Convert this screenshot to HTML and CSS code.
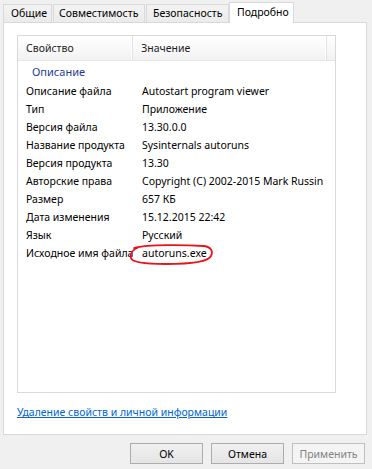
FILE: index.html
```html
<!DOCTYPE html>
<html>
<head>
    <title>Свойства: autoruns.exe</title>
    <link rel="stylesheet" href="styles.css">
</head>
<body>
    <div id="dialog">
        <div id="tabs">
            <div class="tab tab-general">Общие</div>
            <div class="tab tab-compat">Совместимость</div>
            <div class="tab tab-security">Безопасность</div>
            <div class="tab tab-details active">Подробно</div>
        </div>
        <div id="panel">
            <div id="prop-list">
                <div class="list-header">
                    <div class="col-head col-name">Свойство</div>
                    <div class="col-head col-value">Значение</div>
                    <div class="col-head col-rest"></div>
                </div>
                <div class="group-row">Описание</div>
                <div class="prop-row"><span class="cell-name">Описание файла</span><span class="cell-value">Autostart program viewer</span></div>
                <div class="prop-row"><span class="cell-name">Тип</span><span class="cell-value">Приложение</span></div>
                <div class="prop-row"><span class="cell-name">Версия файла</span><span class="cell-value">13.30.0.0</span></div>
                <div class="prop-row"><span class="cell-name">Название продукта</span><span class="cell-value">Sysinternals autoruns</span></div>
                <div class="prop-row"><span class="cell-name">Версия продукта</span><span class="cell-value">13.30</span></div>
                <div class="prop-row"><span class="cell-name">Авторские права</span><span class="cell-value">Copyright (C) 2002-2015 Mark Russin</span></div>
                <div class="prop-row"><span class="cell-name">Размер</span><span class="cell-value">657 КБ</span></div>
                <div class="prop-row"><span class="cell-name">Дата изменения</span><span class="cell-value">15.12.2015 22:42</span></div>
                <div class="prop-row"><span class="cell-name">Язык</span><span class="cell-value">Русский</span></div>
                <div class="prop-row"><span class="cell-name">Исходное имя файла</span><span class="cell-value">autoruns.exe</span></div>
                <!-- hand-drawn mark over the file name -->
                <svg id="scribble" width="90" height="24" viewBox="0 0 90 24">
                    <path d="M6 4 C20 0, 60 1, 76 2 C84 3, 85 8, 83 12 C80 18, 60 20, 38 20 C20 20, 4 19, 3 14 C2 10, 3 6, 11 3"
                          fill="none" stroke="#e8131b" stroke-width="1.8" stroke-linecap="round"/>
                </svg>
            </div>
            <a id="remove-link" href="#">Удаление свойств и личной информации</a>
        </div>
        <div id="buttons">
            <button class="btn">OK</button>
            <button class="btn">Отмена</button>
            <button class="btn" disabled>Применить</button>
        </div>
    </div>
</body>
</html>
```

FILE: styles.css
```css
/* Properties dialog, "Details" tab */
body {
    margin: 0;
    font-family: 'Segoe UI', 'Noto Sans', sans-serif;
    font-size: 10.5px;
    color: #000000;
    background-color: #F0F0F0;
}

#dialog {
    padding: 2px 6px 0 3px;
}

#tabs {
    display: flex;
    align-items: flex-end;
    height: 20px;
}

.tab {
    box-sizing: border-box;
    height: 18px;
    margin-right: 1px;
    padding-left: 7px;
    line-height: 16px;
    white-space: nowrap;
    border: 1px solid #D9D9D9;
    border-bottom: none;
    background: linear-gradient(#F3F3F3, #EBEBEB);
}

.tab-general { width: 49px; }
.tab-compat { width: 92px; padding-left: 5px; }
.tab-security { width: 83px; margin-right: 0; padding-left: 6px; }

.tab.active {
    position: relative;
    width: 65px;
    height: 21px;
    margin-bottom: -1px;
    line-height: 19px;
    background: #FFFFFF;
    z-index: 1;
}

#panel {
    box-sizing: border-box;
    width: 364px;
    height: 413px;
    padding: 12px 0 0 13px;
    border: 1px solid #D9D9D9;
    background-color: #FFFFFF;
}

#prop-list {
    position: relative;
    box-sizing: border-box;
    width: 319px;
    height: 358px;
    border: 1px solid #D9D9D9;
}

.list-header {
    display: flex;
    height: 24px;
    border-bottom: 1px solid #E5E5E5;
    background: linear-gradient(#FFFFFF, #F2F2F2);
}

.col-head {
    box-sizing: border-box;
    padding-left: 8px;
    line-height: 24px;
    color: #1E1E1E;
    border-right: 1px solid #E3E3E3;
    box-shadow: inset -1px 0 0 #FFFFFF;
}

.col-name { width: 117px; }
.col-value { width: 197px; }
.col-rest { flex-grow: 1; border-right: none; box-shadow: none; }

.group-row {
    height: 21px;
    padding-left: 14px;
    line-height: 21px;
    font-size: 11px;
    color: #1E3C96;
}

.prop-row {
    display: flex;
    height: 18px;
    line-height: 18px;
    white-space: nowrap;
}

.cell-name {
    box-sizing: border-box;
    width: 116px;
    padding-left: 8px;
    overflow: hidden;
}

.cell-value {
    box-sizing: border-box;
    width: 196px;
    padding-left: 8px;
    overflow: hidden;
}

#scribble {
    position: absolute;
    left: 110px;
    top: 208px;
    overflow: visible;
}

#remove-link {
    display: inline-block;
    margin-top: 11px;
    line-height: 16px;
    color: #0066CC;
    text-decoration: underline;
}

#buttons {
    display: flex;
    justify-content: flex-end;
    gap: 8px;
    padding: 8px 1px 0 0;
}

.btn {
    box-sizing: border-box;
    width: 73px;
    height: 21px;
    padding: 0;
    font-family: 'Segoe UI', 'Noto Sans', sans-serif;
    font-size: 10.5px;
    color: #000000;
    border: 1px solid #ACACAC;
    background: linear-gradient(#F0F0F0, #E5E5E5);
}

.btn:disabled {
    color: #838383;
    border-color: #BFBFBF;
    background: #F4F4F4;
}
```
